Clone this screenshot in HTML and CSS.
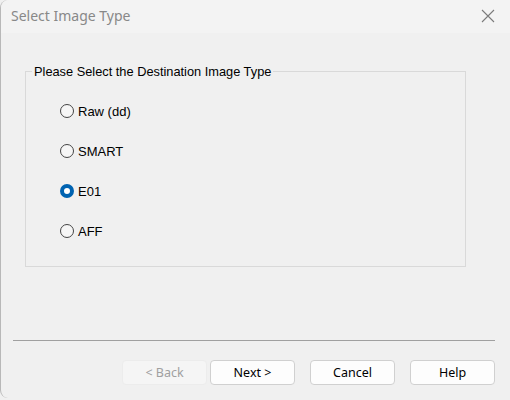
FILE: index.html
```html
<!DOCTYPE html>
<html>
<head>
<meta charset="utf-8">
<link rel="stylesheet" href="styles.css">
</head>
<body>
<div class="window">
  <div class="titlebar">
    <span class="title">Select Image Type</span>
    <svg class="close" width="14" height="14" viewBox="0 0 14 14"><path d="M1 1L13 13M13 1L1 13" stroke="#7a7a7a" stroke-width="1.1" fill="none"/></svg>
  </div>
  <div class="content">
    <fieldset class="group">
      <legend class="legend">Please Select the Destination Image Type</legend>
      <div class="options">
        <label class="opt"><span class="radio"></span><span>Raw (dd)</span></label>
        <label class="opt"><span class="radio"></span><span>SMART</span></label>
        <label class="opt"><span class="radio checked"></span><span>E01</span></label>
        <label class="opt"><span class="radio"></span><span>AFF</span></label>
      </div>
    </fieldset>
  </div>
  <div class="separator"></div>
  <div class="buttons">
    <button class="btn disabled">&lt; Back</button>
    <button class="btn next">Next &gt;</button>
    <button class="btn gap">Cancel</button>
    <button class="btn gap">Help</button>
  </div>
</div>
</body>
</html>
```
FILE: styles.css
```css
html, body {
  margin: 0;
  padding: 0;
  background: #f0f0f0;
}
.window {
  width: 510px;
  height: 398px;
  background: #f0f0f0;
  border-left: 1px solid #b8b8b8;
  border-radius: 8px 0 0 8px;
  box-sizing: border-box;
  display: flex;
  flex-direction: column;
}
.titlebar {
  height: 33px;
  background: #f3f3f3;
  border-top-left-radius: 8px;
  display: flex;
  align-items: center;
  justify-content: space-between;
  padding: 0 15px 2px 10px;
  box-sizing: border-box;
}
.title {
  font-family: "Noto Sans", sans-serif;
  font-size: 14px;
  color: #888888;
}
.close {
  display: block;
}
.content {
  padding: 0 0 0 24px;
  height: 307px;
  box-sizing: border-box;
}
.group {
  margin: 31px 0 0 0;
  width: 441px;
  height: 203px;
  box-sizing: border-box;
  border: 1px solid #d9d9d9;
  padding: 0;
}
.legend {
  font-family: "Liberation Sans", Arial, sans-serif;
  font-size: 12.8px;
  color: #000;
  margin-left: 6px;
  padding: 0 2px;
}
.options {
  display: flex;
  flex-direction: column;
  gap: 26px;
  padding: 25px 0 0 34px;
}
.opt {
  display: flex;
  align-items: center;
  gap: 4px;
  height: 14px;
  font-family: "Liberation Sans", Arial, sans-serif;
  font-size: 13px;
  color: #000;
}
.radio {
  width: 14px;
  height: 14px;
  box-sizing: border-box;
  border: 1px solid #444444;
  border-radius: 50%;
  background: #f6f6f6;
}
.radio.checked {
  border: 4px solid #0063b1;
  background: #ffffff;
}
.separator {
  height: 1px;
  background: #a0a0a0;
  margin: 0 15px 0 12px;
}
.buttons {
  display: flex;
  justify-content: flex-end;
  padding: 19px 15px 0 0;
}
.btn {
  width: 85px;
  height: 25px;
  box-sizing: border-box;
  border: 1px solid #d0d0d0;
  border-radius: 4px;
  background: #fdfdfd;
  font-family: "Noto Sans", sans-serif;
  font-size: 12.5px;
  color: #000;
  padding: 0;
}
.btn.disabled {
  background: #f5f5f5;
  border-color: #ececec;
  color: #a0a0a0;
}
.btn.next {
  margin-left: 3px;
}
.btn.gap {
  margin-left: 15px;
}
```
